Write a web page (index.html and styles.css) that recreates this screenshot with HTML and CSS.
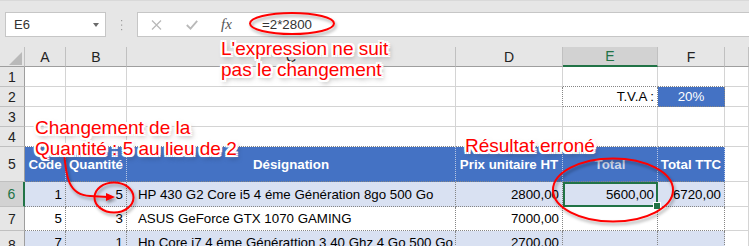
FILE: index.html
```html
<!DOCTYPE html>
<html lang="fr">
<head>
  <meta charset="UTF-8" />
  <title>Facture - Excel</title>
  <link rel="stylesheet" href="styles.css">
</head>
<body>
<div class="app">
  <div class="formula-bar">
    <div class="name-box"><span>E6</span><span class="caret"></span></div>
    <div class="grip">
      <svg width="3" height="11" viewBox="0 0 3 11"><rect x="1" y="0" width="1.2" height="1.2" fill="#9a9a9a"/><rect x="1" y="4.5" width="1.2" height="1.2" fill="#9a9a9a"/><rect x="1" y="9" width="1.2" height="1.2" fill="#9a9a9a"/></svg>
    </div>
    <div class="formula-box">
      <span class="fb-icon">
        <svg width="11" height="10" viewBox="0 0 11 10"><path d="M1 0.5 L10 9.5 M10 0.5 L1 9.5" stroke="#b9b9b9" stroke-width="1.3" fill="none"/></svg>
      </span>
      <span class="fb-icon">
        <svg width="12" height="10" viewBox="0 0 12 10"><path d="M0.8 5 L4.5 8.6 L11.2 0.8" stroke="#b9b9b9" stroke-width="1.8" fill="none"/></svg>
      </span>
      <span class="fb-icon fx">fx</span>
      <span class="formula">=2*2800</span>
    </div>
  </div>

  <table class="sheet">
    <colgroup>
      <col class="w-rh"><col class="w-a"><col class="w-b"><col class="w-c"><col class="w-d"><col class="w-e"><col class="w-f"><col class="w-g">
    </colgroup>
    <tr class="row-head">
      <th class="corner"><svg width="14" height="14" viewBox="0 0 14 14"><polygon points="14,0 14,14 0,14" fill="#b9b9b9"/></svg></th>
      <th class="ch">A</th><th class="ch">B</th><th class="ch">C</th><th class="ch">D</th><th class="ch ch-sel">E</th><th class="ch">F</th><th class="ch"></th>
    </tr>
    <tr class="row-20">
      <th class="rh">1</th>
      <td></td><td></td><td></td><td></td><td class="dot-b"></td><td class="dot-b"></td><td></td>
    </tr>
    <tr class="row-20">
      <th class="rh">2</th>
      <td></td><td></td><td></td><td class="dot-r"></td>
      <td class="num dot-r dot-b">T.V.A :</td>
      <td class="pct dot-r dot-b">20%</td>
      <td></td>
    </tr>
    <tr class="row-20">
      <th class="rh">3</th>
      <td></td><td></td><td></td><td></td><td></td><td></td><td></td>
    </tr>
    <tr class="row-20">
      <th class="rh">4</th>
      <td class="dot-b"></td><td class="dot-b"></td><td class="dot-b"></td><td class="dot-b"></td><td class="dot-b"></td><td class="dot-b"></td><td></td>
    </tr>
    <tr class="row-title">
      <th class="rh">5</th>
      <td class="blue dot-r dot-b">Code</td>
      <td class="blue dot-r dot-b">Quantité</td>
      <td class="blue dot-r dot-b">Désignation</td>
      <td class="blue dot-r dot-b">Prix unitaire HT</td>
      <td class="blue faded dot-r dot-b">Total</td>
      <td class="blue dot-r dot-b">Total TTC</td>
      <td></td>
    </tr>
    <tr class="row-6 band">
      <th class="rh rh-sel">6</th>
      <td class="num dot-r dot-b">1</td>
      <td class="num dot-r dot-b">5</td>
      <td class="txt dot-r dot-b">HP 430 G2 Core i5 4 éme Génération 8go 500 Go</td>
      <td class="num dot-r dot-b">2800,00</td>
      <td class="num dot-r dot-b cell-sel">5600,00</td>
      <td class="num dot-r dot-b">6720,00</td>
      <td class="plain"></td>
    </tr>
    <tr class="row-7">
      <th class="rh">7</th>
      <td class="num dot-r dot-b">5</td>
      <td class="num dot-r dot-b">3</td>
      <td class="txt dot-r dot-b">ASUS GeForce GTX 1070 GAMING</td>
      <td class="num dot-r dot-b">7000,00</td>
      <td class="num dot-r dot-b"></td>
      <td class="num dot-r dot-b"></td>
      <td class="plain"></td>
    </tr>
    <tr class="row-8 band">
      <th class="rh">8</th>
      <td class="num dot-r dot-b">7</td>
      <td class="num dot-r dot-b">1</td>
      <td class="txt dot-r dot-b">Hp Core i7 4 éme Générattion 3 40 Ghz 4 Go 500 Go</td>
      <td class="num dot-r dot-b">2700,00</td>
      <td class="num dot-r dot-b"></td>
      <td class="num dot-r dot-b"></td>
      <td class="plain"></td>
    </tr>
  </table>

  <!-- annotations drawn on top of the sheet -->
  <svg class="marks" width="749" height="246" viewBox="0 0 749 246">
    <defs>
      <filter id="shadow" x="-20%" y="-20%" width="140%" height="160%">
        <feDropShadow dx="1.5" dy="2.5" stdDeviation="1.5" flood-color="#000" flood-opacity="0.35"/>
      </filter>
    </defs>
    <g fill="none" stroke="#f00" stroke-width="2" filter="url(#shadow)">
      <ellipse cx="292" cy="23.5" rx="42" ry="10.5"/>
      <ellipse cx="114" cy="197.5" rx="19.5" ry="15"/>
      <ellipse cx="613" cy="190" rx="60" ry="31.5"/>
      <path d="M64 152 C66 176 68 195 90 196 L108 197"/>
    </g>
    <polygon points="106,193 115,197 106,201" fill="#f00" filter="url(#shadow)"/>
  </svg>

  <div class="note note-formula">L'expression ne suit<br>pas le changement</div>
  <div class="note note-qty">Changement de la<br>Quantité : 5 au lieu de 2</div>
  <div class="note note-total">Résultat erroné</div>
</div>
</body>
</html>
```

FILE: styles.css
```css
* {
  box-sizing: border-box;
}
body {
  margin: 0;
  background: #fff;
  font-family: "Liberation Sans", Arial, sans-serif;
  overflow: hidden;
}
.app {
  position: relative;
  width: 749px;
  height: 246px;
  overflow: hidden;
}

/* formula bar */
.formula-bar {
  display: flex;
  align-items: flex-start;
  height: 47px;
  padding: 12px 0 0 5px;
  background: #e6e6e6;
  border-top: 1px solid #d9d9d9;
}
.name-box {
  width: 101px;
  height: 25px;
  margin-top: -1px;
  display: flex;
  align-items: center;
  justify-content: space-between;
  padding: 0 6px 0 8px;
  background: #fff;
  border: 1px solid #c6c6c6;
  color: #333;
  font-size: 13px;
}
.caret {
  width: 0;
  height: 0;
  border-left: 3.5px solid transparent;
  border-right: 3.5px solid transparent;
  border-top: 4px solid #6a6a6a;
}
.grip {
  width: 31px;
  height: 25px;
  display: flex;
  align-items: center;
  justify-content: center;
}
.formula-box {
  flex: 1;
  height: 25px;
  margin-top: -1px;
  display: flex;
  align-items: center;
  padding-left: 1px;
  background: #fff;
  border: 1px solid #c6c6c6;
  border-right: none;
}
.fb-icon {
  width: 35px;
  display: flex;
  justify-content: center;
  align-items: center;
}
.fx {
  font-family: "Liberation Serif", serif;
  font-style: italic;
  font-size: 15px;
  color: #555;
}
.formula {
  margin-left: 18px;
  font-size: 13.3px;
  color: #333;
}

/* sheet grid */
.sheet {
  width: 749px;
  table-layout: fixed;
  border-collapse: separate;
  border-spacing: 0;
  font-size: 13.3px;
  color: #000;
}
.w-rh { width: 25px; }
.w-a { width: 41px; }
.w-b { width: 61px; }
.w-c { width: 329px; }
.w-d { width: 107px; }
.w-e { width: 95px; }
.w-f { width: 67px; }
.w-g { width: 24px; }

.sheet td,
.sheet th {
  padding: 0;
  border-right: 1px solid #d4d4d4;
  border-bottom: 1px solid #d4d4d4;
  white-space: nowrap;
  overflow: hidden;
  vertical-align: middle;
}
.row-head th {
  height: 20px;
  background: #e6e6e6;
  border-right: 1px solid #c0c0c0;
  border-bottom: 1px solid #9e9e9e;
  font-weight: normal;
  font-size: 14px;
  color: #222;
}
.corner {
  text-align: right;
  vertical-align: bottom !important;
  padding: 0 2px 1px 0 !important;
}
.corner svg {
  display: block;
  margin-left: auto;
  width: 13px;
  height: 13px;
}
.ch-sel {
  background: #d2d2d2 !important;
  border-bottom: 2px solid #217346 !important;
  color: #217346 !important;
}
.rh {
  background: #e6e6e6;
  border-right: 1px solid #9e9e9e !important;
  border-bottom: 1px solid #c0c0c0 !important;
  font-weight: normal;
  font-size: 14px;
  color: #222;
}
.rh-sel {
  background: #d2d2d2;
  border-right: 2px solid #217346 !important;
  color: #217346;
}
.row-20 > * { height: 20px; }
.row-title > * { height: 35px; }
.row-6 > * { height: 25px; }
.row-7 > * { height: 24px; }
.row-8 > * { height: 24px; vertical-align: top; padding-top: 3px; }
.row-8 .rh { padding-top: 4px; }

.dot-r { border-right: 1px dotted #858585 !important; }
.dot-b { border-bottom: 1px dotted #858585 !important; }

.band td { background: #d9e1f2; }
.band td.plain { background: #fff; }

.blue {
  background: #4472c4;
  color: #fff;
  font-weight: bold;
  text-align: center;
  border-right-color: #b9c6e2 !important;
}
.faded { color: #cfd7ea; }

.num {
  text-align: right;
  padding-right: 3px !important;
}
.txt {
  padding-left: 11px !important;
}
.pct {
  background: #4472c4;
  color: #fff;
  text-align: center;
}
.cell-sel {
  position: relative;
  outline: 2px solid #217346;
  outline-offset: -2px;
  overflow: visible !important;
}
.cell-sel::after {
  content: "";
  position: absolute;
  right: -4px;
  bottom: -4px;
  width: 6px;
  height: 6px;
  background: #217346;
  border: 1px solid #fff;
}

/* annotations */
.marks {
  position: absolute;
  left: 0;
  top: 0;
  pointer-events: none;
}
.note {
  position: absolute;
  color: #f00;
  font-size: 19px;
  line-height: 21px;
  white-space: nowrap;
  text-shadow:
    -2px -2px 0 #fff, 2px -2px 0 #fff, -2px 2px 0 #fff, 2px 2px 0 #fff,
    0 -2px 0 #fff, 0 2px 0 #fff, -2px 0 0 #fff, 2px 0 0 #fff,
    0 0 3px #fff, 0 0 4px #fff,
    2px 3px 5px rgba(0, 0, 0, 0.5);
}
.note-formula { left: 221px; top: 38px; }
.note-qty { left: 35px; top: 117px; }
.note-total { left: 465px; top: 135px; }
```
